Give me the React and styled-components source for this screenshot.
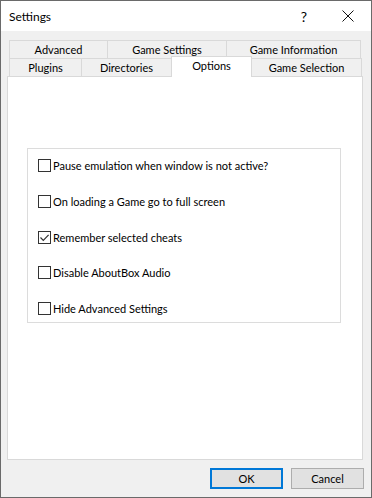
import React from "react";
import styled, { createGlobalStyle } from "styled-components";

const GlobalStyle = createGlobalStyle`
  html, body {
    margin: 0;
    padding: 0;
    background: #ffffff;
  }
  * {
    box-sizing: border-box;
  }
`;

const FONT = `"Segoe UI", Lato, "Liberation Sans", sans-serif`;

const topTabs = [
  { label: "Advanced", width: 99 },
  { label: "Game Settings", width: 120 },
  { label: "Game Information", width: 135 },
];

const bottomTabs = [
  { label: "Plugins", width: 73 },
  { label: "Directories", width: 91 },
  { label: "Options", width: 81, selected: true },
  { label: "Game Selection", width: 111 },
];

const options = [
  { label: "Pause emulation when window is not active?", checked: false },
  { label: "On loading a Game go to full screen", checked: false },
  { label: "Remember selected cheats", checked: true },
  { label: "Disable AboutBox Audio", checked: false },
  { label: "Hide Advanced Settings", checked: false },
];

const Checkbox = ({ checked, label }) => (
  <OptionRow>
    <Box>
      {checked && (
        <svg width="11" height="11" viewBox="0 0 11 11">
          <path d="M1.5 5.5 L4.3 8.3 L9.6 2.8" fill="none" stroke="#333" strokeWidth="1.2" />
        </svg>
      )}
    </Box>
    <OptionLabel>{label}</OptionLabel>
  </OptionRow>
);

const App = () => (
  <>
    <GlobalStyle />
    <Window>
      <TitleBar>
        <Title>Settings</Title>
        <TitleButtons>
          <HelpMark>?</HelpMark>
          <CloseIcon width="12" height="12" viewBox="0 0 12 12">
            <path d="M0.5 0.5 L11.5 11.5 M11.5 0.5 L0.5 11.5" stroke="#111" strokeWidth="1" />
          </CloseIcon>
        </TitleButtons>
      </TitleBar>
      <Body>
        <TabStrip>
          <TabRow>
            {topTabs.map((t) => (
              <Tab key={t.label} $width={t.width}>{t.label}</Tab>
            ))}
          </TabRow>
          <TabRow>
            {bottomTabs.map((t) => (
              <Tab key={t.label} $width={t.width} $selected={t.selected}>
                {t.label}
              </Tab>
            ))}
          </TabRow>
        </TabStrip>
        <Panel>
          <GroupBox>
            {options.map((o) => (
              <Checkbox key={o.label} label={o.label} checked={o.checked} />
            ))}
          </GroupBox>
        </Panel>
        <ButtonRow>
          <Button $focused>OK</Button>
          <Button>Cancel</Button>
        </ButtonRow>
      </Body>
    </Window>
  </>
);

const Window = styled.div`
  width: 372px;
  height: 498px;
  border: 1px solid #6a6a6a;
  display: flex;
  flex-direction: column;
  font-family: ${FONT};
  font-size: 11px;
  color: #000;
`;

const TitleBar = styled.div`
  height: 30px;
  background: #ffffff;
  display: flex;
  align-items: center;
  justify-content: space-between;
  padding: 0 17px 0 8px;
`;

const Title = styled.span`
  font-size: 12px;
  margin-top: 1px;
`;

const TitleButtons = styled.div`
  display: flex;
  align-items: center;
  gap: 35px;
`;

const HelpMark = styled.span`
  font-size: 14px;
`;

const CloseIcon = styled.svg`
  display: block;
`;

const Body = styled.div`
  flex: 1;
  background: #f0f0f0;
  display: flex;
  flex-direction: column;
  padding: 9px 8px 0 6px;
`;

const TabStrip = styled.div`
  display: flex;
  flex-direction: column;
  padding-left: 2px;
`;

const TabRow = styled.div`
  display: flex;
  height: 18px;
`;

const Tab = styled.div`
  position: relative;
  width: ${(p) => p.$width}px;
  height: ${(p) => (p.$selected ? "21px" : "18px")};
  margin-top: ${(p) => (p.$selected ? "-2px" : "0")};
  margin-left: -1px;
  &:first-child {
    margin-left: 0;
  }
  z-index: ${(p) => (p.$selected ? 2 : 1)};
  background: ${(p) => (p.$selected ? "#ffffff" : "#f0f0f0")};
  border: 1px solid #d9d9d9;
  border-bottom: none;
  display: flex;
  align-items: center;
  justify-content: center;
  padding-bottom: ${(p) => (p.$selected ? "3px" : "0")};
  line-height: 14px;
  white-space: nowrap;
`;

const Panel = styled.div`
  height: 384px;
  background: #ffffff;
  border: 1px solid #d9d9d9;
  padding: 71px 21px 0 19px;
`;

const GroupBox = styled.div`
  height: 175px;
  border: 1px solid #dcdcdc;
  display: flex;
  flex-direction: column;
  gap: 22.75px;
  padding: 10px 0 0 10px;
`;

const OptionRow = styled.div`
  display: flex;
  align-items: center;
  height: 13px;
`;

const Box = styled.div`
  width: 13px;
  height: 13px;
  border: 1px solid #333333;
  background: #ffffff;
  display: flex;
  align-items: center;
  justify-content: center;
  flex-shrink: 0;
`;

const OptionLabel = styled.span`
  margin-left: 2px;
  white-space: nowrap;
  line-height: 13px;
`;

const ButtonRow = styled.div`
  display: flex;
  justify-content: flex-end;
  gap: 8px;
  margin-top: 8px;
  margin-right: -1px;
`;

const Button = styled.div`
  width: 73px;
  height: 21px;
  background: #e1e1e1;
  border: ${(p) => (p.$focused ? "2px solid #0078d7" : "1px solid #adadad")};
  display: flex;
  align-items: center;
  justify-content: center;
  font-size: 11px;
`;

export default App;
